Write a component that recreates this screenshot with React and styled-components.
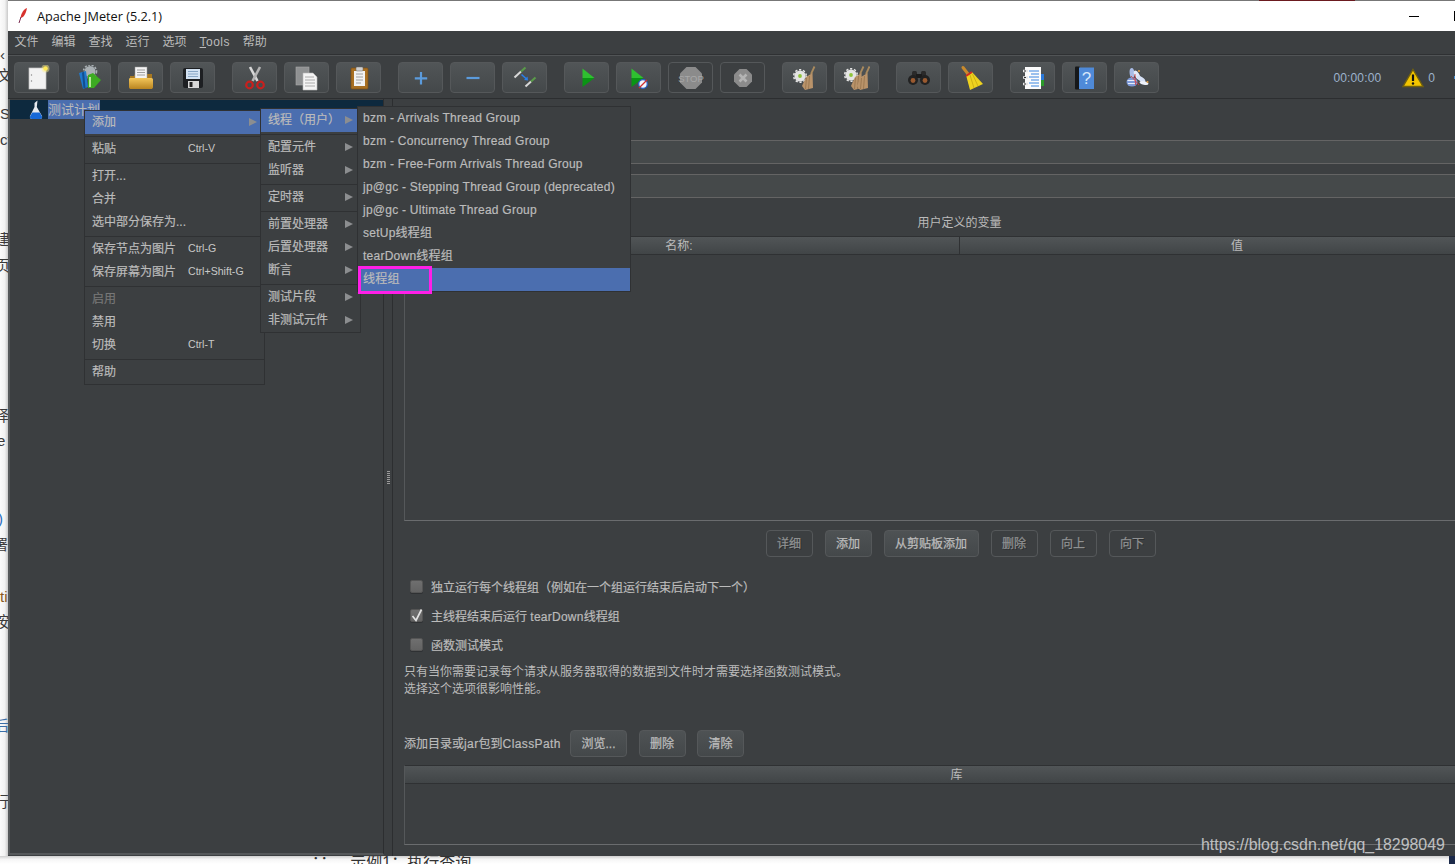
import styled, { createGlobalStyle } from "styled-components";

const SANS = `"Liberation Sans", "Noto Sans CJK SC", sans-serif`;

const Global = createGlobalStyle`
  html, body {
    margin: 0;
    padding: 0;
    background: #f4f4f4;
    overflow: hidden;
  }
  * { box-sizing: border-box; }
`;

const Page = styled.div`
  position: relative;
  width: 1455px;
  height: 864px;
  overflow: hidden;
  font-family: ${SANS};
  font-size: 12px;
  color: #bbbbbb;
`;

const Top = styled.div`
  display: flex;
  height: 856px;
`;

/* the web page behind the window, only a sliver shows */
const Behind = styled.div`
  width: 8px;
  flex: none;
  overflow: hidden;
  background: linear-gradient(90deg, #fbfbfb 0%, #f2f2f2 60%, #c9c9c9 100%);
  font-size: 15px;
  line-height: 16px;
  color: #333;
`;

const Frag = styled.div`
  white-space: nowrap;
  margin-top: ${(p) => p.$gap}px;
  margin-left: ${(p) => p.$x || 0}px;
  color: ${(p) => p.$color || "#3a3a3a"};
`;

const Bottom = styled.div`
  display: flex;
  height: 8px;
  overflow: hidden;
  padding-left: 312px;
  background: linear-gradient(180deg, #cfcfcf 0%, #f5f5f5 40%, #fff 100%);
  font-size: 16px;
  line-height: 20px;
  color: #333;
`;

const BottomText = styled.span`
  margin-top: -3px;
  white-space: pre;
`;

const NavyBit = styled.span`
  width: 6px;
  margin-left: auto;
  background: #1c2a4a;
`;

const Win = styled.div`
  width: 1447px;
  flex: none;
  display: flex;
  flex-direction: column;
  overflow: hidden;
  background: #3c3f41;
`;

const TopEdge = styled.div`
  height: 1px;
  flex: none;
  background: #777;
`;

const TopEdgeRed = styled.div`
  width: 96px;
  height: 1px;
  margin-left: 1251px;
  background: #6b1a1f;
`;

const TitleBar = styled.div`
  height: 30px;
  flex: none;
  display: flex;
  align-items: center;
  padding-left: 10px;
  background: #fff;
  color: #111;
  font-family: "Open Sans", "Noto Sans", sans-serif;
  font-size: 12.7px;
`;

const AppName = styled.span`
  margin-left: 9px;
`;

const Minimize = styled.span`
  width: 10px;
  height: 1px;
  margin-left: auto;
  background: #000;
`;

const Maximize = styled.span`
  width: 10px;
  height: 10px;
  margin-left: 35px;
  margin-right: -9px;
  border: 1px solid #000;
`;

const MenuBar = styled.div`
  height: 23px;
  flex: none;
  display: flex;
  align-items: center;
`;

const MenuName = styled.span`
  padding: 0 6.5px;
  line-height: 21px;
  letter-spacing: ${(p) => (p.$wide ? 0.45 : 0)}px;
  u { text-underline-offset: 1px; }
`;

const Toolbar = styled.div`
  height: 45px;
  flex: none;
  display: flex;
  align-items: center;
  gap: 7px;
  padding: 2px 20px 0 6px;
  border-top: 1px solid #2f3133;
  border-bottom: 1px solid #2c2e30;
  box-shadow: inset 0 1px 0 #515456;
`;

const ToolBtn = styled.div`
  width: 45px;
  height: 31px;
  flex: none;
  display: flex;
  align-items: center;
  justify-content: center;
  margin-right: ${(p) => (p.$end ? 10 : 0)}px;
  border: 1px solid #55585a;
  border-radius: 4px;
  background: ${(p) =>
    p.$off ? "#3c3f41" : "linear-gradient(180deg, #515557 0%, #44484a 100%)"};
`;

const Status = styled.div`
  margin-left: auto;
  display: flex;
  align-items: center;
  color: #9db3cc;
`;

const Timer = styled.span`
  margin-right: 21px;
  letter-spacing: 0.15px;
`;

const ErrCount = styled.span`
  margin-left: 4px;
`;

const CutOff = styled.span`
  position: absolute;
  right: 0;
  top: 76px;
  width: 1px;
  height: 3px;
  background: #4a8fd0;
`;

const Body = styled.div`
  flex: 1;
  min-height: 0;
  display: flex;
`;

const TreePane = styled.div`
  width: 376px;
  flex: none;
  margin-bottom: 1px;
  padding-top: 1px;
  border-left: 2px solid #55585a;
  border-bottom: 2px solid #55585a;
  border-right: 1px solid #2c2e30;
`;

const TreeRow = styled.div`
  height: 19px;
  display: flex;
  align-items: center;
  padding-left: 18px;
  background: #0d293e;
`;

const TreeLabel = styled.span`
  margin-left: 4px;
  width: 52px;
  height: 19px;
  background: #4b6eaf;
  font-size: 13px;
  line-height: 19px;
  white-space: nowrap;
`;

const Divider = styled.div`
  width: 9px;
  flex: none;
  display: flex;
  align-items: center;
  justify-content: center;
  border-right: 1px solid #2c2e30;
`;

const Grip = styled.span`
  width: 3px;
  height: 14px;
  background: repeating-linear-gradient(180deg, #9a9a9a 0 1px, transparent 1px 2px);
`;

const Main = styled.div`
  width: 1122px;
  flex: none;
  padding: 41px 0 0 11px;
`;

const Field = styled.div`
  height: 24px;
  margin-bottom: 10px;
  margin-left: 40px;
  background: #45494a;
  border-top: 1px solid #646464;
  border-bottom: 1px solid #646464;
`;

const SectionTitle = styled.div`
  height: 16px;
  line-height: 16px;
  margin-top: 17px;
  margin-bottom: 5px;
  text-align: center;
`;

const DataTable = styled.div`
  display: flex;
  flex-direction: column;
  height: ${(p) => p.$h}px;
  margin-top: ${(p) => p.$top || 0}px;
  border: 1px solid #2f3133;
  border-bottom: 1px solid #6a6c6e;
  border-left-color: #55585a;
`;

const HeadRow = styled.div`
  height: 18px;
  flex: none;
  display: flex;
  background: linear-gradient(180deg, #515557 0%, #414547 100%);
  border-bottom: 1px solid #2f3133;
`;

const HeadCell = styled.div`
  flex: 1;
  text-align: center;
  line-height: 18px;
  text-indent: ${(p) => -(p.$shift || 0)}px;
  & + & { border-left: 1px solid #2f3133; }
`;

const BtnRow = styled.div`
  display: flex;
  justify-content: center;
  gap: 12px;
  margin-top: 9px;
  padding-left: 2px;
`;

const Btn = styled.div`
  width: ${(p) => p.$w || 47}px;
  height: 27px;
  flex: none;
  display: flex;
  align-items: center;
  justify-content: center;
  padding-bottom: 2px;
  border: 1px solid #55585a;
  border-radius: 4px;
  background: ${(p) =>
    p.$off ? "#3c3f41" : "linear-gradient(180deg, #4e5254 0%, #44484a 100%)"};
  color: ${(p) => (p.$off ? "#8f9192" : "#bbbbbb")};
  text-shadow: ${(p) => (p.$off ? "1px 1px 0 #2b2d2f" : "none")};
  -webkit-text-stroke: 0.25px currentColor;
`;

const Checks = styled.div`
  margin-top: 15px;
`;

const CheckRow = styled.label`
  height: 29px;
  display: flex;
  align-items: center;
  padding-left: 6px;
  white-space: pre;
  -webkit-text-stroke: 0.2px currentColor;
`;

const Box = styled.span`
  width: 13px;
  height: 13px;
  margin-right: 8px;
  flex: none;
  display: flex;
  align-items: center;
  justify-content: center;
  border: 1px solid #555;
  border-radius: 2px;
  background: linear-gradient(180deg, #6f6f6f 0%, #636363 100%);
  box-shadow: 0 1px 0 #2f3133;
`;

const Latin = styled.span`
  letter-spacing: ${(p) => p.$track || 0.25}px;
`;

const Note = styled.div`
  margin-top: 5px;
  line-height: 17px;
`;

const PathRow = styled.div`
  display: flex;
  align-items: center;
  margin-top: 32px;
`;

const PathLabel = styled.span`
  width: 166px;
  flex: none;
  padding-bottom: 2px;
  -webkit-text-stroke: 0.2px currentColor;
`;

const PathBtns = styled.div`
  display: flex;
  gap: 11.5px;
`;

const Menu = styled.div`
  position: absolute;
  left: ${(p) => p.$left}px;
  top: ${(p) => p.$top}px;
  width: ${(p) => p.$w}px;
  background: #3c3f41;
  border: 1px solid #2f3133;
`;

const Item = styled.div`
  height: 23px;
  display: flex;
  align-items: center;
  padding: 0 7px ${(p) => p.$lift ?? 4}px ${(p) => p.$pad || 7}px;
  background: ${(p) => (p.$on ? "#4b6eaf" : "transparent")};
  color: ${(p) => (p.$off ? "#777" : "#bbbbbb")};
  white-space: nowrap;
  letter-spacing: ${(p) => p.$track || 0}px;
  -webkit-text-stroke: 0.2px currentColor;
`;

const ItemLabel = styled.span`
  min-width: ${(p) => p.$min || 0}px;
`;

const Shortcut = styled.span`
  font-size: 10.6px;
  color: #c8c8c8;
  -webkit-text-stroke: 0;
`;

const Arrow = styled.span`
  margin-left: auto;
  margin-top: 2px;
  width: 0;
  height: 0;
  border-left: 8px solid #8c8e90;
  border-top: 4.5px solid transparent;
  border-bottom: 4.5px solid transparent;
`;

const Sep = styled.div`
  height: 4px;
  display: flex;
  align-items: center;
  &::after {
    content: "";
    width: 100%;
    height: 1px;
    background: #2f3133;
  }
`;

const Marker = styled.div`
  position: absolute;
  left: 358px;
  top: 266px;
  width: 74px;
  height: 28px;
  border: 3px solid #ff1fe8;
`;

const Watermark = styled.div`
  position: absolute;
  left: 1201px;
  top: 836px;
  font-size: 15.9px;
  color: rgba(225, 225, 225, 0.8);
  white-space: nowrap;
`;

const TickSvg = styled.svg`
  overflow: visible;
`;

/* toolbar drawings, all on a 26 box */
const Ic = ({ children, s = 26 }) => (
  <svg width={s} height={s} viewBox="0 0 26 26">
    {children}
  </svg>
);

const Feather = () => (
  <svg width="10" height="18" viewBox="0 0 10 18">
    <path d="M9 1C6 2 3 6 2.5 11L5 10C7 8 8.500 4 9 1Z" fill="#d8322e" />
    <path d="M3 10L1 16" stroke="#7a2a50" strokeWidth="1" />
  </svg>
);

const Flask = () => (
  <svg width="16" height="20" viewBox="0 0 16 20">
    <path d="M9.500 0.500L8.800 7L14 16C14.500 18 13.500 19 12 19H4C2.500 19 1.500 18 2 16L6.500 7V3Z" fill="#e6e9ee" />
    <path d="M4.300 12.500H11.700L14 16.500C14.300 18 13.500 19 12 19H4C2.500 19 1.700 18 2 16.500Z" fill="#1668d8" />
  </svg>
);

const NewIcon = () => (
  <Ic>
    <rect x="5" y="3" width="17" height="21" fill="#f2f2f2" stroke="#c4c4c4" strokeWidth="0.7" />
    <circle cx="7.500" cy="10" r="0.7" fill="#888" />
    <circle cx="7.500" cy="16" r="0.7" fill="#888" />
    <circle cx="21.500" cy="3.500" r="4" fill="#fff08a" opacity="0.45" />
    <circle cx="21.500" cy="3.500" r="2.300" fill="#ffe95a" />
  </Ic>
);

const TemplatesIcon = () => (
  <Ic>
    <circle cx="14" cy="6.500" r="5.500" fill="#a9b0b4" />
    <circle cx="14" cy="6.500" r="6.500" fill="none" stroke="#a9b0b4" strokeWidth="1.600" strokeDasharray="2 1.500" />
    <path d="M3 8L10 6L12 22L7 24Z" fill="#1f78cc" />
    <path d="M6 7.500L8 7L9.500 23L7.500 23.500Z" fill="#134f8f" />
    <path d="M12 10L17 8L25 15L18 23L12 23Z" fill="#3cab22" />
    <path d="M13 12H15V22H13Z" fill="#b6e89a" />
  </Ic>
);

const OpenIcon = () => (
  <Ic>
    <defs>
      <linearGradient id="folderFront" x1="0" y1="0" x2="0" y2="1">
        <stop offset="0" stopColor="#f3c65a" />
        <stop offset="1" stopColor="#b98420" />
      </linearGradient>
    </defs>
    <path d="M2 11H6L7 9H24V22H2Z" fill="#a87820" />
    <rect x="7" y="2" width="12" height="13" fill="#f4f4f4" stroke="#999" strokeWidth="0.5" />
    <path d="M9 5H17M9 7.500H17M9 10H17" stroke="#8a8a8a" strokeWidth="0.8" />
    <path d="M1 14C1 13 2 13 3 13H23C25 13 25 14 25 15V22C25 23.500 24 24 23 24H3C2 24 1 23.500 1 22Z" fill="url(#folderFront)" />
  </Ic>
);

const SaveIcon = () => (
  <Ic>
    <rect x="3" y="3" width="20" height="20" rx="2" fill="#1d1f22" />
    <rect x="6" y="4" width="14" height="10" fill="#d3e2f2" />
    <path d="M8 6.500H18M8 9H18M8 11.500H18" stroke="#7f9fc0" strokeWidth="0.9" />
    <rect x="8" y="16" width="11" height="7" fill="#d8d8d8" />
    <rect x="9.500" y="17" width="3" height="5" fill="#222" />
  </Ic>
);

const CutIcon = () => (
  <Ic>
    <path d="M8 2L15.500 16" stroke="#d8d8d8" strokeWidth="2.600" />
    <path d="M18 2L10.500 16" stroke="#b4b4b4" strokeWidth="2.600" />
    <circle cx="7.500" cy="20" r="3.300" fill="none" stroke="#c8201e" strokeWidth="2.200" />
    <circle cx="18.500" cy="20" r="3.300" fill="none" stroke="#c8201e" strokeWidth="2.200" />
  </Ic>
);

const CopyIcon = () => (
  <Ic>
    <rect x="2" y="2" width="13" height="18" fill="#8f9192" stroke="#a8a8a8" strokeWidth="0.6" />
    <path d="M9 8H19L23 12V25H9Z" fill="#f4f4f4" stroke="#b8b8b8" strokeWidth="0.6" />
    <path d="M11 12H20M11 15H21M11 18H21M11 21H21" stroke="#9a9a9a" strokeWidth="0.8" />
  </Ic>
);

const PasteIcon = () => (
  <Ic>
    <rect x="5" y="3" width="17" height="21" rx="1" fill="#a86f22" stroke="#7d4f14" strokeWidth="0.7" />
    <rect x="8" y="6" width="11" height="15" fill="#f2f2f2" />
    <rect x="10" y="2" width="7" height="4" rx="1" fill="#d0d0d0" stroke="#666" strokeWidth="0.5" />
    <path d="M10 9H17M10 12H17M10 15H17M10 18H15" stroke="#8a8a8a" strokeWidth="0.8" />
  </Ic>
);

const PlusIcon = () => (
  <Ic>
    <path d="M13 7V19.500M6.800 13.300H19.200" stroke="#5b9bdc" strokeWidth="2.200" />
  </Ic>
);

const MinusIcon = () => (
  <Ic>
    <path d="M6.500 13H19.500" stroke="#5b9bdc" strokeWidth="2.200" />
  </Ic>
);

const ToggleIcon = () => (
  <Ic>
    <path d="M2.500 12.500L9 6.500" stroke="#d8d8d8" strokeWidth="2" />
    <path d="M9 6.500L13.500 2.500" stroke="#5a9a4a" strokeWidth="2.200" />
    <path d="M13.500 21.500L19 16.500" stroke="#d8d8d8" strokeWidth="2" />
    <path d="M19 16.500L23.500 12.500" stroke="#5a9a4a" strokeWidth="2.200" />
    <path d="M9.500 9.500L14.500 14" stroke="#2b7fe8" strokeWidth="1.600" />
    <path d="M16 15.500L12 15L15.500 11.500Z" fill="#2b7fe8" />
  </Ic>
);

const PlayIcon = () => (
  <Ic>
    <path d="M8.500 3.500L20.500 13H8.500Z" fill="#2fc030" />
    <path d="M8.500 22L20.500 13H8.500Z" fill="#0a9414" />
  </Ic>
);

const PlayNoTimerIcon = () => (
  <Ic>
    <path d="M5.500 3.500L17.500 13H5.500Z" fill="#2fc030" />
    <path d="M5.500 22L17.500 13H5.500Z" fill="#0a9414" />
    <circle cx="17" cy="19" r="4.300" fill="#f4f6fb" stroke="#2a62c8" strokeWidth="1.300" />
    <path d="M13 23L21 15" stroke="#d03030" strokeWidth="1.200" />
  </Ic>
);

const StopIcon = () => (
  <Ic>
    <path d="M8.500 2H17.500L24 8.500V17.500L17.500 24H8.500L2 17.500V8.500Z" fill="#8b8b8b" />
    <text x="13" y="16.500" textAnchor="middle" fontSize="9.500" fontFamily="Liberation Sans" fill="#a8a8a8">STOP</text>
  </Ic>
);

const ShutIcon = () => (
  <Ic>
    <path d="M9.500 4H16.500L22 9.500V16.500L16.500 22H9.500L4 16.500V9.500Z" fill="#8b8b8b" />
    <path d="M9.500 9.500L16.500 16.500M16.500 9.500L9.500 16.500" stroke="#b4b4b4" strokeWidth="2.600" />
  </Ic>
);

const Gear = ({ x = 8, y = 11 }) => (
  <g>
    <circle cx={x} cy={y} r="6.300" fill="none" stroke="#e6e6e6" strokeWidth="1.500" strokeDasharray="2.200 1.800" />
    <circle cx={x} cy={y} r="5.600" fill="#e4e4e4" />
    <circle cx={x} cy={y} r="1.900" fill="#8fc43a" />
  </g>
);

const Brush = ({ dx = 0 }) => (
  <g transform={`translate(${dx} 0)`}>
    <path d="M19 9L22.500 1.500" stroke="#a98a5e" strokeWidth="1.800" />
    <path d="M14 12L20.500 8L21 23L13 25L10 21Z" fill="#b9936a" />
    <path d="M14.500 13L13.500 24M17.500 11L16.500 24" stroke="#8f6e48" strokeWidth="0.700" />
  </g>
);

const ClearIcon = () => (
  <Ic>
    <Gear />
    <Brush />
  </Ic>
);

const ClearAllIcon = () => (
  <Ic>
    <Gear x={7} y={10} />
    <Brush dx={-3} />
    <Brush dx={3} />
  </Ic>
);

const BinocularsIcon = () => (
  <Ic>
    <rect x="6" y="6" width="5" height="5" rx="1.500" fill="#2a2a2a" />
    <rect x="15" y="6" width="5" height="5" rx="1.500" fill="#2a2a2a" />
    <rect x="10" y="9" width="6" height="4" fill="#1c1c1c" />
    <circle cx="7" cy="15" r="5" fill="#222" />
    <circle cx="19" cy="15" r="5" fill="#222" />
    <circle cx="7" cy="15.500" r="2.400" fill="#9a5a30" />
    <circle cx="19" cy="15.500" r="2.400" fill="#9a5a30" />
  </Ic>
);

const BroomIcon = () => (
  <Ic>
    <path d="M5 2.500L10 9" stroke="#c98a2c" strokeWidth="3" strokeLinecap="round" />
    <path d="M8 10L14 7L25 19L12 25Z" fill="#eed21f" />
    <path d="M12 10L16 23M14.500 9L20 21" stroke="#c7a812" strokeWidth="0.800" />
    <path d="M8 11L14 7" stroke="#d02a20" strokeWidth="2" />
  </Ic>
);

const NotebookIcon = () => (
  <Ic>
    <rect x="20" y="9" width="4" height="6" fill="#2a78d8" />
    <rect x="20" y="15" width="4" height="6" fill="#2a9a2a" />
    <rect x="5" y="2" width="16" height="22" fill="#fbfbfb" />
    <path d="M9 6H19M11 9H19M9 12H19M11 15H19M9 18H19M11 21H19" stroke="#3a86e0" strokeWidth="1" />
    <path d="M3 6H8M3 12.500H8M3 19H8" stroke="#e8e8e8" strokeWidth="2.600" />
    <path d="M4 6H6M4 12.500H6M4 19H6" stroke="#333" strokeWidth="1" />
  </Ic>
);

const HelpIcon = () => (
  <Ic>
    <rect x="3" y="1.500" width="5" height="23" rx="1" fill="#16181a" />
    <rect x="7" y="2.500" width="15" height="21.500" fill="#4f8ad8" />
    <text x="14.500" y="19" textAnchor="middle" fontSize="17" fontFamily="Liberation Sans" fill="#d6e6fa">?</text>
  </Ic>
);

const TreeIcon = () => (
  <Ic>
    <ellipse cx="8" cy="8" rx="2.400" ry="5" transform="rotate(-5 8 8)" fill="#a9bce6" />
    <ellipse cx="13" cy="10" rx="2.300" ry="5" transform="rotate(-30 13 10)" fill="#e4ebf9" />
    <ellipse cx="17" cy="14" rx="2.200" ry="5" transform="rotate(-55 17 14)" fill="#d6e1f6" />
    <ellipse cx="20" cy="18" rx="1.800" ry="4.500" transform="rotate(-78 20 18)" fill="#eef2fb" />
    <ellipse cx="8" cy="17" rx="5.500" ry="4.500" fill="#7e9ad8" />
    <path d="M3.500 15.500H12M4 18.500H11" stroke="#e6edfa" strokeWidth="1" />
    <path d="M7 11L15 20M11 9L11.500 20" stroke="#d8383a" strokeWidth="0.800" />
    <circle cx="15" cy="6" r="1" fill="#e8a040" />
    <circle cx="23.500" cy="17" r="1" fill="#e8a040" />
  </Ic>
);

const WarnIcon = () => (
  <svg width="22" height="20" viewBox="0 0 22 20">
    <path d="M11 1.500L21 18.500H1Z" fill="#f2c400" stroke="#6f5f10" strokeWidth="1.400" />
    <path d="M11 6.500V13" stroke="#111" strokeWidth="2.200" />
    <circle cx="11" cy="15.500" r="1.200" fill="#111" />
  </svg>
);

const Tick = () => (
  <TickSvg width="14" height="14" viewBox="0 0 14 14">
    <path d="M2.500 7L6 11.500L11.500 0.500" fill="none" stroke="#e2e2e2" strokeWidth="1.700" />
  </TickSvg>
);

const toolButtons = [
  { I: NewIcon },
  { I: TemplatesIcon },
  { I: OpenIcon },
  { I: SaveIcon, end: true },
  { I: CutIcon },
  { I: CopyIcon },
  { I: PasteIcon, end: true },
  { I: PlusIcon },
  { I: MinusIcon },
  { I: ToggleIcon, end: true },
  { I: PlayIcon },
  { I: PlayNoTimerIcon },
  { I: StopIcon, off: true },
  { I: ShutIcon, off: true, end: true },
  { I: ClearIcon },
  { I: ClearAllIcon, end: true },
  { I: BinocularsIcon },
  { I: BroomIcon, end: true },
  { I: NotebookIcon },
  { I: HelpIcon },
  { I: TreeIcon },
];

const behind = [
  { t: "‹", gap: 47 },
  { t: "文", gap: 5, x: -3 },
  { t: "S", gap: 22 },
  { t: "ct", gap: 10 },
  { t: "建", gap: 84, x: -5 },
  { t: "页", gap: 10, x: -5 },
  { t: "择", gap: 134, x: -6 },
  { t: "e", gap: 9, x: -3 },
  { t: ")", gap: 62, x: -2, color: "#2a6fc0" },
  { t: "署", gap: 10, x: -7 },
  { t: "ti", gap: 36, color: "#8a5a20" },
  { t: "按", gap: 9, x: -6 },
  { t: "后", gap: 88, x: -6, color: "#3a6fa8" },
  { t: "行", gap: 60, x: -6 },
];

const mainMenu = [
  { label: "添加", arrow: true, on: true },
  "sep",
  { label: "粘贴", key: "Ctrl-V" },
  "sep",
  { label: "打开..." },
  { label: "合并" },
  { label: "选中部分保存为..." },
  "sep",
  { label: "保存节点为图片", key: "Ctrl-G" },
  { label: "保存屏幕为图片", key: "Ctrl+Shift-G" },
  "sep",
  { label: "启用", off: true },
  { label: "禁用" },
  { label: "切换", key: "Ctrl-T" },
  "sep",
  { label: "帮助" },
];

const addMenu = [
  { label: "线程（用户）", arrow: true, on: true },
  "sep",
  { label: "配置元件", arrow: true },
  { label: "监听器", arrow: true },
  "sep",
  { label: "定时器", arrow: true },
  "sep",
  { label: "前置处理器", arrow: true },
  { label: "后置处理器", arrow: true },
  { label: "断言", arrow: true },
  "sep",
  { label: "测试片段", arrow: true },
  { label: "非测试元件", arrow: true },
];

const threadMenu = [
  "bzm - Arrivals Thread Group",
  "bzm - Concurrency Thread Group",
  "bzm - Free-Form Arrivals Thread Group",
  "jp@gc - Stepping Thread Group (deprecated)",
  "jp@gc - Ultimate Thread Group",
  "setUp线程组",
  "tearDown线程组",
  "线程组",
];

function MenuList({ items, min }) {
  return items.map((it, i) =>
    it === "sep" ? (
      <Sep key={i} />
    ) : (
      <Item key={i} $on={it.on} $off={it.off}>
        <ItemLabel $min={it.key ? min : 0}>{it.label}</ItemLabel>
        {it.key && <Shortcut>{it.key}</Shortcut>}
        {it.arrow && <Arrow />}
      </Item>
    )
  );
}

export default function App() {
  return (
    <Page>
      <Global />
      <Top>
        <Behind>
          {behind.map((f, i) => (
            <Frag key={i} $gap={f.gap} $x={f.x} $color={f.color}>
              {f.t}
            </Frag>
          ))}
        </Behind>
        <Win>
          <TopEdge>
            <TopEdgeRed />
          </TopEdge>
          <TitleBar>
            <Feather />
            <AppName>Apache JMeter (5.2.1)</AppName>
            <Minimize />
            <Maximize />
          </TitleBar>
          <MenuBar>
            <MenuName>文件</MenuName>
            <MenuName>编辑</MenuName>
            <MenuName>查找</MenuName>
            <MenuName>运行</MenuName>
            <MenuName>选项</MenuName>
            <MenuName $wide>
              <u>T</u>ools
            </MenuName>
            <MenuName>帮助</MenuName>
          </MenuBar>
          <Toolbar>
            {toolButtons.map(({ I, off, end }, i) => (
              <ToolBtn key={i} $off={off} $end={end}>
                <I />
              </ToolBtn>
            ))}
            <Status>
              <Timer>00:00:00</Timer>
              <WarnIcon />
              <ErrCount>0</ErrCount>
            </Status>
            <CutOff />
          </Toolbar>
          <Body>
            <TreePane>
              <TreeRow>
                <Flask />
                <TreeLabel>测试计划</TreeLabel>
              </TreeRow>
            </TreePane>
            <Divider>
              <Grip />
            </Divider>
            <Main>
              <Field />
              <Field />
              <SectionTitle>用户定义的变量</SectionTitle>
              <DataTable $h={285}>
                <HeadRow>
                  <HeadCell $shift={6}>名称:</HeadCell>
                  <HeadCell>值</HeadCell>
                </HeadRow>
              </DataTable>
              <BtnRow>
                <Btn $off>详细</Btn>
                <Btn>添加</Btn>
                <Btn $w={95}>从剪贴板添加</Btn>
                <Btn $off>删除</Btn>
                <Btn $off>向上</Btn>
                <Btn $off>向下</Btn>
              </BtnRow>
              <Checks>
                <CheckRow>
                  <Box />
                  独立运行每个线程组（例如在一个组运行结束后启动下一个）
                </CheckRow>
                <CheckRow>
                  <Box>
                    <Tick />
                  </Box>
                  <span>
                    主线程结束后运行 <Latin>tearDown</Latin>线程组
                  </span>
                </CheckRow>
                <CheckRow>
                  <Box />
                  函数测试模式
                </CheckRow>
              </Checks>
              <Note>
                只有当你需要记录每个请求从服务器取得的数据到文件时才需要选择函数测试模式。
                <br />
                选择这个选项很影响性能。
              </Note>
              <PathRow>
                <PathLabel>
                  添加目录或<Latin $track={0.4}>jar</Latin>包到<Latin $track={0.4}>ClassPath</Latin>
                </PathLabel>
                <PathBtns>
                  <Btn $w={57}>浏览...</Btn>
                  <Btn>删除</Btn>
                  <Btn>清除</Btn>
                </PathBtns>
              </PathRow>
              <DataTable $h={80} $top={8}>
                <HeadRow>
                  <HeadCell $shift={6}>库</HeadCell>
                </HeadRow>
              </DataTable>
            </Main>
          </Body>
        </Win>
      </Top>
      <Bottom>
        <BottomText>{"∵     示例1：执行查询"}</BottomText>
        <NavyBit />
      </Bottom>

      <Menu $left={84} $top={110} $w={181}>
        <MenuList items={mainMenu} min={96} />
      </Menu>
      <Menu $left={260} $top={108} $w={101}>
        <MenuList items={addMenu} />
      </Menu>
      <Menu $left={357} $top={106} $w={274}>
        {threadMenu.map((t, i) => (
          <Item key={t} $pad={5} $on={i === 7} $track={0.25} $lift={i < 5 ? 2 : 4}>
            {t}
          </Item>
        ))}
      </Menu>
      <Marker />
      <Watermark>https://blog.csdn.net/qq_18298049</Watermark>
    </Page>
  );
}
